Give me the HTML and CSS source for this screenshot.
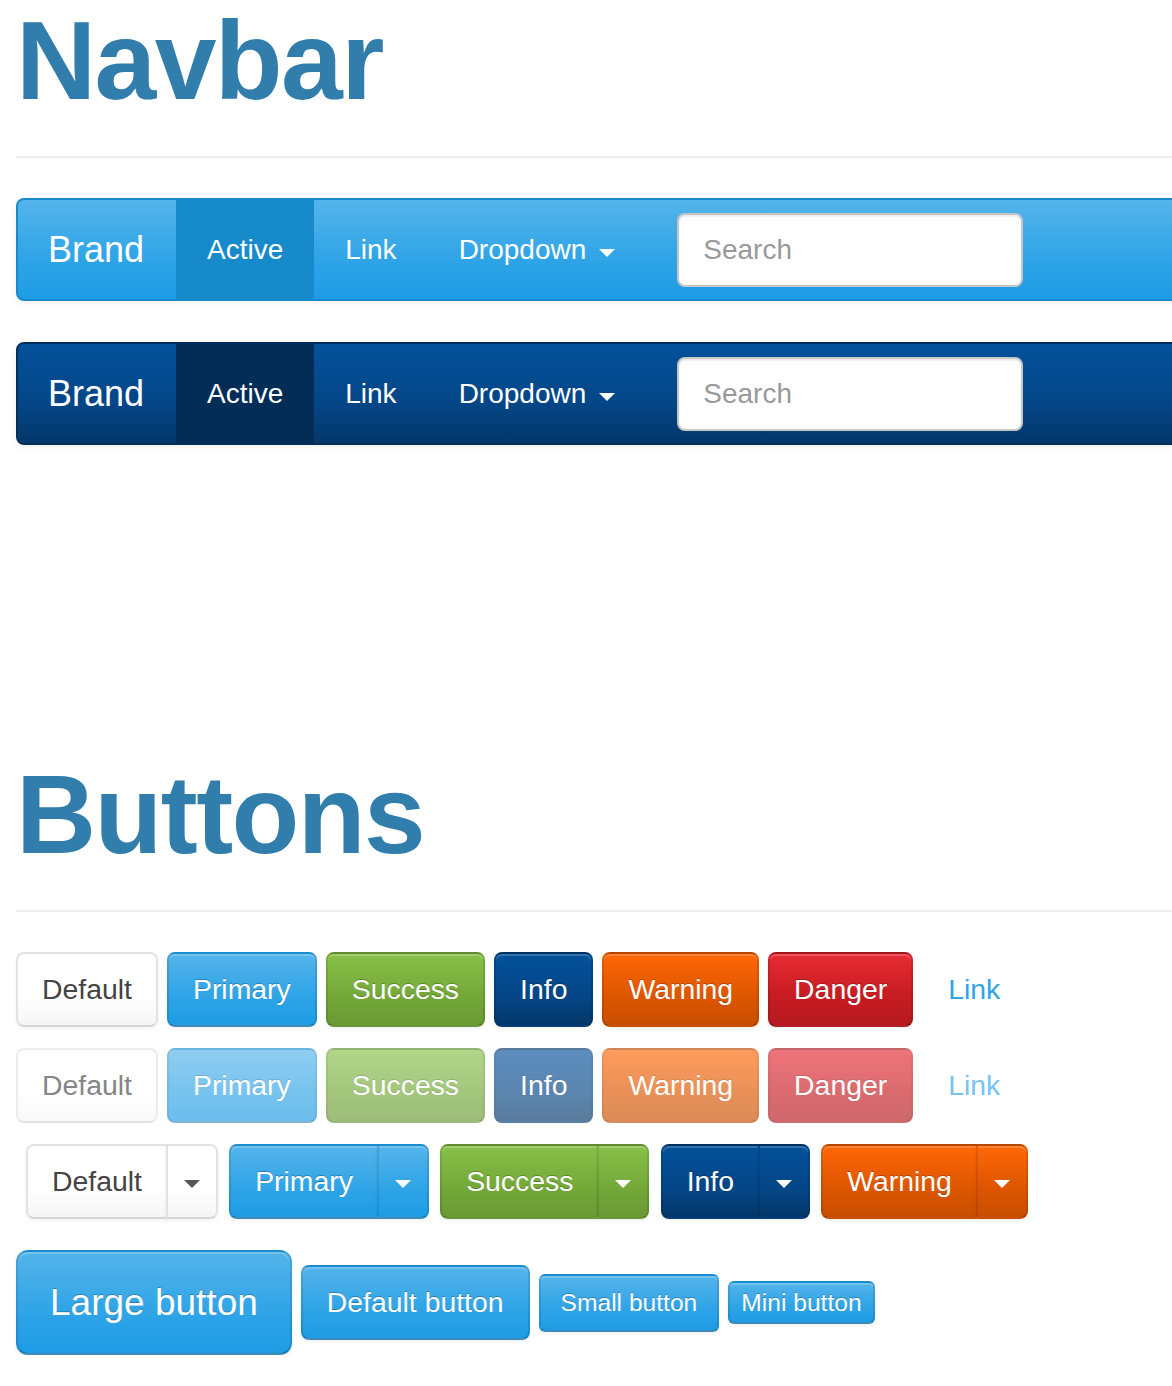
FILE: index.html
```html
<!DOCTYPE html>
<html lang="en">
<head>
<meta charset="utf-8">
<title>Navbar &amp; Buttons</title>
<link rel="stylesheet" href="styles.css">
</head>
<body>
<main class="page">
  <section class="section">
    <h1 class="page-title">Navbar</h1>
    <hr class="rule">

    <nav class="navbar">
      <a class="brand">Brand</a>
      <ul class="nav">
        <li class="nav-item active"><a class="nav-link">Active</a></li>
        <li class="nav-item"><a class="nav-link">Link</a></li>
        <li class="nav-item"><a class="nav-link">Dropdown<span class="caret"></span></a></li>
      </ul>
      <input class="search" type="text" placeholder="Search">
    </nav>

    <nav class="navbar navbar-inverse">
      <a class="brand">Brand</a>
      <ul class="nav">
        <li class="nav-item active"><a class="nav-link">Active</a></li>
        <li class="nav-item"><a class="nav-link">Link</a></li>
        <li class="nav-item"><a class="nav-link">Dropdown<span class="caret"></span></a></li>
      </ul>
      <input class="search" type="text" placeholder="Search">
    </nav>
  </section>

  <section class="section section-buttons">
    <h1 class="page-title">Buttons</h1>
    <hr class="rule">

    <div class="btn-row first-row">
      <button class="btn btn-default">Default</button>
      <button class="btn btn-primary">Primary</button>
      <button class="btn btn-success">Success</button>
      <button class="btn btn-info">Info</button>
      <button class="btn btn-warning">Warning</button>
      <button class="btn btn-danger">Danger</button>
      <button class="btn btn-link">Link</button>
    </div>

    <div class="btn-row">
      <button class="btn btn-default disabled">Default</button>
      <button class="btn btn-primary disabled">Primary</button>
      <button class="btn btn-success disabled">Success</button>
      <button class="btn btn-info disabled">Info</button>
      <button class="btn btn-warning disabled">Warning</button>
      <button class="btn btn-danger disabled">Danger</button>
      <button class="btn btn-link disabled">Link</button>
    </div>

    <div class="btn-row btn-toolbar">
      <div class="btn-group">
        <button class="btn btn-default">Default</button>
        <button class="btn btn-default btn-toggle"><span class="caret caret-dark"></span></button>
      </div>
      <div class="btn-group">
        <button class="btn btn-primary">Primary</button>
        <button class="btn btn-primary btn-toggle"><span class="caret"></span></button>
      </div>
      <div class="btn-group">
        <button class="btn btn-success">Success</button>
        <button class="btn btn-success btn-toggle"><span class="caret"></span></button>
      </div>
      <div class="btn-group">
        <button class="btn btn-info">Info</button>
        <button class="btn btn-info btn-toggle"><span class="caret"></span></button>
      </div>
      <div class="btn-group">
        <button class="btn btn-warning">Warning</button>
        <button class="btn btn-warning btn-toggle"><span class="caret"></span></button>
      </div>
    </div>

    <div class="btn-row size-row">
      <button class="btn btn-primary btn-large">Large button</button>
      <button class="btn btn-primary">Default button</button>
      <button class="btn btn-primary btn-small">Small button</button>
      <button class="btn btn-primary btn-mini">Mini button</button>
    </div>
  </section>
</main>
</body>
</html>
```

FILE: styles.css
```css
html, body {
  margin: 0;
  padding: 0;
  overflow: hidden;
  background: #ffffff;
}

body {
  font-family: "Liberation Sans", Arial, Helvetica, sans-serif;
  color: #555555;
}

.page {
  width: 1320px;
  padding-left: 16px;
}

.page-title {
  margin: 1px 0 0;
  font-size: 111px;
  line-height: 120px;
  font-weight: bold;
  letter-spacing: -1.6px;
  color: #317eac;
}

.rule {
  margin: 35px 0 0;
  height: 2px;
  border: 0;
  background: #eeeeee;
}

.section-buttons {
  margin-top: 310px;
}

.section-buttons .page-title {
  margin-top: 0;
}

/* ---------- Navbar ---------- */
.navbar {
  margin-top: 40px;
  height: 99px;
  display: flex;
  align-items: stretch;
  border: 2px solid #178acc;
  border-radius: 8px;
  background: linear-gradient(#54b4eb, #2fa4e7 60%, #1d9ce5);
  box-shadow: 0 2px 8px rgba(0, 0, 0, 0.065);
}

.navbar + .navbar {
  margin-top: 41px;
}

.brand {
  box-sizing: border-box;
  width: 158px;
  padding-left: 30px;
  display: flex;
  align-items: center;
  font-size: 36px;
  color: #ffffff;
}

.nav {
  display: flex;
  margin: 0;
  padding: 0;
  list-style: none;
}

.nav-item {
  display: flex;
}

.nav-link {
  display: flex;
  align-items: center;
  padding: 0 31px;
  font-size: 28px;
  color: #ffffff;
}

.nav-item.active {
  background: #178acc;
}

.caret {
  display: inline-block;
  width: 0;
  height: 0;
  margin-left: 13px;
  margin-top: 6px;
  border-top: 8px solid #ffffff;
  border-left: 8px solid transparent;
  border-right: 8px solid transparent;
}

.caret-dark {
  border-top-color: #555555;
}

.search {
  box-sizing: border-box;
  align-self: center;
  width: 346px;
  height: 74px;
  margin: 0 0 0 31px;
  padding: 0 24px;
  border: 2px solid #c6c6c6;
  border-radius: 8px;
  background: #ffffff;
  box-shadow: inset 0 2px 2px rgba(0, 0, 0, 0.075);
  font-family: "Liberation Sans", Arial, Helvetica, sans-serif;
  font-size: 28px;
  color: #555555;
  outline: none;
}

.search::placeholder {
  color: #999999;
}

.navbar-inverse {
  border-color: #022f5a;
  background: linear-gradient(#04519b, #044687 60%, #033769);
}

.navbar-inverse .nav-item.active {
  background: #032d57;
}

/* ---------- Buttons ---------- */
.btn-row {
  display: flex;
  gap: 9px;
  margin-top: 21px;
}

.btn-row.first-row {
  margin-top: 40px;
}

.btn {
  box-sizing: border-box;
  display: inline-flex;
  align-items: center;
  justify-content: center;
  margin: 0;
  padding: 15px 24px;
  border: 2px solid;
  border-color: rgba(0, 0, 0, 0.1) rgba(0, 0, 0, 0.1) rgba(0, 0, 0, 0.22);
  border-radius: 8px;
  font-family: "Liberation Sans", Arial, Helvetica, sans-serif;
  font-size: 28.4px;
  line-height: 41px;
  color: #ffffff;
  text-shadow: 0 -1px 0 rgba(0, 0, 0, 0.25);
  box-shadow: inset 0 2px 0 rgba(255, 255, 255, 0.2), 0 2px 4px rgba(0, 0, 0, 0.05);
  cursor: pointer;
}

.btn-default {
  color: #444444;
  text-shadow: 0 1px 1px rgba(255, 255, 255, 0.75);
  border-color: #e2e2e2 #e2e2e2 #d6d6d6;
  background: linear-gradient(#ffffff, #ffffff 60%, #f5f5f5);
}

.btn-primary {
  background: linear-gradient(#54b4eb, #2fa4e7 60%, #1d9ce5);
}

.btn-success {
  background: linear-gradient(#88c149, #73a839 60%, #699934);
}

.btn-info {
  background: linear-gradient(#04519b, #044687 60%, #033769);
}

.btn-warning {
  background: linear-gradient(#ff6707, #dd5600 60%, #c94e00);
}

.btn-danger {
  background: linear-gradient(#e72b33, #c71c22 60%, #b5191f);
}

.btn-link {
  background: none;
  border-color: transparent;
  box-shadow: none;
  text-shadow: none;
  color: #2fa4e7;
}

.btn.disabled {
  opacity: 0.65;
  box-shadow: none;
}

/* split buttons */
.btn-toolbar {
  padding-left: 10px;
  gap: 11.2px;
}

.btn-group {
  display: flex;
}

.btn-group .btn {
  border-radius: 8px 0 0 8px;
}

.btn-group .btn-toggle {
  width: 52px;
  margin-left: -2px;
  padding: 15px 16px;
  border-radius: 0 8px 8px 0;
}

.btn-toggle .caret {
  margin-left: 0;
  margin-top: 4px;
}

/* sizes */
.size-row {
  margin-top: 31px;
  align-items: center;
}

.btn-large {
  padding: 28px 32px;
  font-size: 37px;
  line-height: 45px;
  border-radius: 12px;
}

.btn-small {
  padding: 10px 20px;
  font-size: 24.6px;
  line-height: 34px;
  border-radius: 6px;
}

.btn-mini {
  padding: 4px 11px;
  font-size: 24.6px;
  line-height: 31px;
  border-radius: 6px;
}
```
